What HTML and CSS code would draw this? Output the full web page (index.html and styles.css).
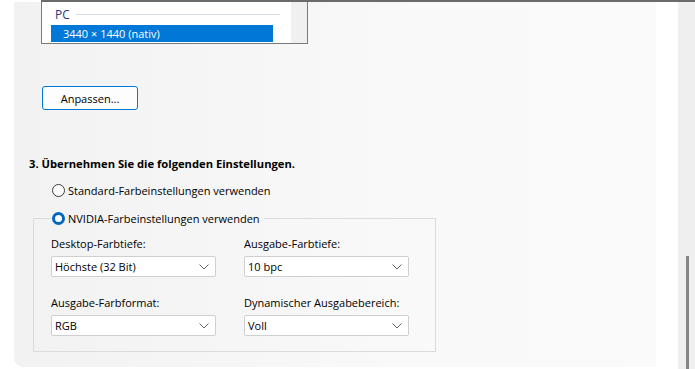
FILE: index.html
```html
<!DOCTYPE html>
<html lang="de">

<head>
    <meta charset="UTF-8">
    <meta name="viewport" content="width=device-width, initial-scale=1.0">
    <title>Farbeinstellungen</title>
    <link rel="stylesheet" href="styles.css">
</head>

<body>

    <!-- Window top edge -->
    <div class="topline"></div>

    <div class="frame">
        <div class="gutter"></div>

        <!-- Settings panel -->
        <div class="panel">

            <!-- Resolution list -->
            <div class="listbox">
                <div class="list-items">
                    <div class="group-header">
                        <span>PC</span>
                        <span class="group-rule"></span>
                    </div>
                    <div class="list-item selected">3440 × 1440 (nativ)</div>
                </div>
                <div class="list-scroll"></div>
            </div>

            <button class="btn">Anpassen...</button>

            <h2 class="step">3. Übernehmen Sie die folgenden Einstellungen.</h2>

            <label class="radio">
                <span class="radio-dot"></span>
                Standard-Farbeinstellungen verwenden
            </label>

            <fieldset class="group">
                <legend>
                    <label class="radio">
                        <span class="radio-dot checked"></span>
                        NVIDIA-Farbeinstellungen verwenden
                    </label>
                </legend>

                <div class="fields">
                    <div class="field">
                        <span class="field-label">Desktop-Farbtiefe:</span>
                        <div class="combo">
                            <span>Höchste (32 Bit)</span>
                            <svg class="chevron" width="10" height="6" viewBox="0 0 10 6"><path d="M0.5 0.5 L5 5 L9.5 0.5" /></svg>
                        </div>
                    </div>
                    <div class="field">
                        <span class="field-label">Ausgabe-Farbtiefe:</span>
                        <div class="combo">
                            <span>10 bpc</span>
                            <svg class="chevron" width="10" height="6" viewBox="0 0 10 6"><path d="M0.5 0.5 L5 5 L9.5 0.5" /></svg>
                        </div>
                    </div>
                    <div class="field">
                        <span class="field-label">Ausgabe-Farbformat:</span>
                        <div class="combo">
                            <span>RGB</span>
                            <svg class="chevron" width="10" height="6" viewBox="0 0 10 6"><path d="M0.5 0.5 L5 5 L9.5 0.5" /></svg>
                        </div>
                    </div>
                    <div class="field">
                        <span class="field-label">Dynamischer Ausgabebereich:</span>
                        <div class="combo">
                            <span>Voll</span>
                            <svg class="chevron" width="10" height="6" viewBox="0 0 10 6"><path d="M0.5 0.5 L5 5 L9.5 0.5" /></svg>
                        </div>
                    </div>
                </div>
            </fieldset>
        </div>

        <div class="spacer"></div>

        <!-- Page scrollbar -->
        <div class="scrollbar">
            <div class="thumb"></div>
        </div>
    </div>

</body>

</html>
```

FILE: styles.css
```css
/* General Reset */
* {
    margin: 0;
    padding: 0;
    box-sizing: border-box;
}

body {
    font-family: 'Open Sans', 'Noto Sans', sans-serif;
    font-size: 11px;
    color: #000;
    background: #fff;
    width: 695px;
    height: 369px;
    overflow: hidden;
}

.topline {
    height: 2px;
    margin-left: 41px;
    background: #6b6b6b;
}

.frame {
    display: flex;
    height: 367px;
}

.gutter {
    width: 14px;
}

/* Panel */
.panel {
    width: 642px;
    height: 365px;
    background: linear-gradient(to right, #f2f2f2, #f9f9f9 60%, #fafafa);
    border-bottom-left-radius: 9px;
}

.spacer {
    width: 22px;
}

/* Resolution list */
.listbox {
    display: flex;
    width: 267px;
    height: 42px;
    margin-left: 27px;
    border: 1px solid #7a7a7a;
    border-top: none;
    background: #fff;
}

.list-items {
    flex: 1;
    padding: 4px 18px 0 9px;
}

.list-scroll {
    width: 16px;
    background: #f0f0f0;
}

.group-header {
    display: flex;
    align-items: center;
    gap: 6px;
    height: 16px;
    padding-left: 4px;
    color: #1e3a8a;
    font-size: 12px;
}

.group-rule {
    flex: 1;
    height: 1px;
    margin-right: -7px;
    background: #d5dde2;
}

.list-item {
    height: 17px;
    margin-top: 3px;
    padding-left: 12px;
    line-height: 17px;
}

.list-item.selected {
    background: #0078d7;
    color: #fff;
}

/* Button */
.btn {
    display: block;
    width: 96px;
    height: 24px;
    margin: 42px 0 0 28px;
    border: 1px solid #0078d7;
    border-radius: 3px;
    background: #fdfdfd;
    font: inherit;
    color: #000;
}

/* Step heading */
.step {
    margin: 46px 0 0 15px;
    font-size: 11.2px;
    font-weight: bold;
    line-height: 16px;
}

/* Radio buttons */
.radio {
    display: flex;
    align-items: center;
    gap: 3px;
    height: 18px;
    margin: 9px 0 0 38px;
    white-space: nowrap;
}

.radio-dot {
    width: 13px;
    height: 13px;
    border: 1px solid #3a3a3a;
    border-radius: 50%;
    background: #fff;
}

.radio-dot.checked {
    border: 3.5px solid #0067c0;
}

/* Group box */
.group {
    width: 403px;
    height: 143px;
    margin: 10px 0 0 19px;
    padding: 0 0 0 17px;
    border: 1px solid #dcdcdc;
}

.group legend {
    padding: 0 4px 0 1px;
}

.group legend .radio {
    margin: 0;
}

.fields {
    display: grid;
    grid-template-columns: 165px 165px;
    column-gap: 28px;
    row-gap: 18px;
    margin-top: 9px;
}

.field {
    display: flex;
    flex-direction: column;
    gap: 4px;
}

.field-label {
    line-height: 16px;
    white-space: nowrap;
}

.combo {
    display: flex;
    align-items: center;
    justify-content: space-between;
    height: 21px;
    padding: 0 6px 0 3px;
    border: 1px solid #cfcfcf;
    border-radius: 2px;
    background: #fff;
}

.chevron path {
    fill: none;
    stroke: #666;
    stroke-width: 1;
}

/* Scrollbar */
.scrollbar {
    flex: 1;
    display: flex;
    justify-content: center;
    align-items: flex-end;
    background: #efefef;
}

.thumb {
    width: 3px;
    height: 113px;
    margin-left: 1px;
    background: #858585;
}
```
